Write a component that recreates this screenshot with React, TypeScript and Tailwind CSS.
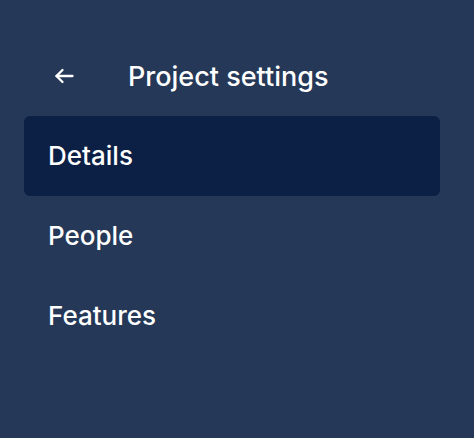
import React from "react";

export default function App() {
  const items = ["Details", "People", "Features"];
  return (
    <div
      className="w-[474px] h-[438px] bg-[#253858] text-white"
      style={{ fontFamily: "Inter, 'Noto Sans', sans-serif" }}
    >
      <div className="pt-[56px] px-[24px]">
        <div className="flex items-center h-[40px]">
          <div className="w-[104px] pl-[28px] flex items-center">
            <svg width="24" height="24" viewBox="0 0 24 24" fill="none" stroke="white" strokeWidth="2.3" strokeLinecap="round" strokeLinejoin="round">
              <path d="M20.5 12H4.5" />
              <path d="M10.5 6L4.5 12l6 6" />
            </svg>
          </div>
          <span className="text-[27px] font-[450] leading-none">Project settings</span>
        </div>
        <div className="mt-[20px] flex flex-col w-[416px]">
          {items.map((it, i) => (
            <div
              key={it}
              className={
                i === 0
                  ? "h-[80px] flex items-center px-[24px] rounded-[6px] bg-[#0c2045]"
                  : "h-[80px] flex items-center px-[24px] rounded-[6px]"
              }
            >
              <span className="text-[26px] font-[450] leading-none">{it}</span>
            </div>
          ))}
        </div>
      </div>
    </div>
  );
}
